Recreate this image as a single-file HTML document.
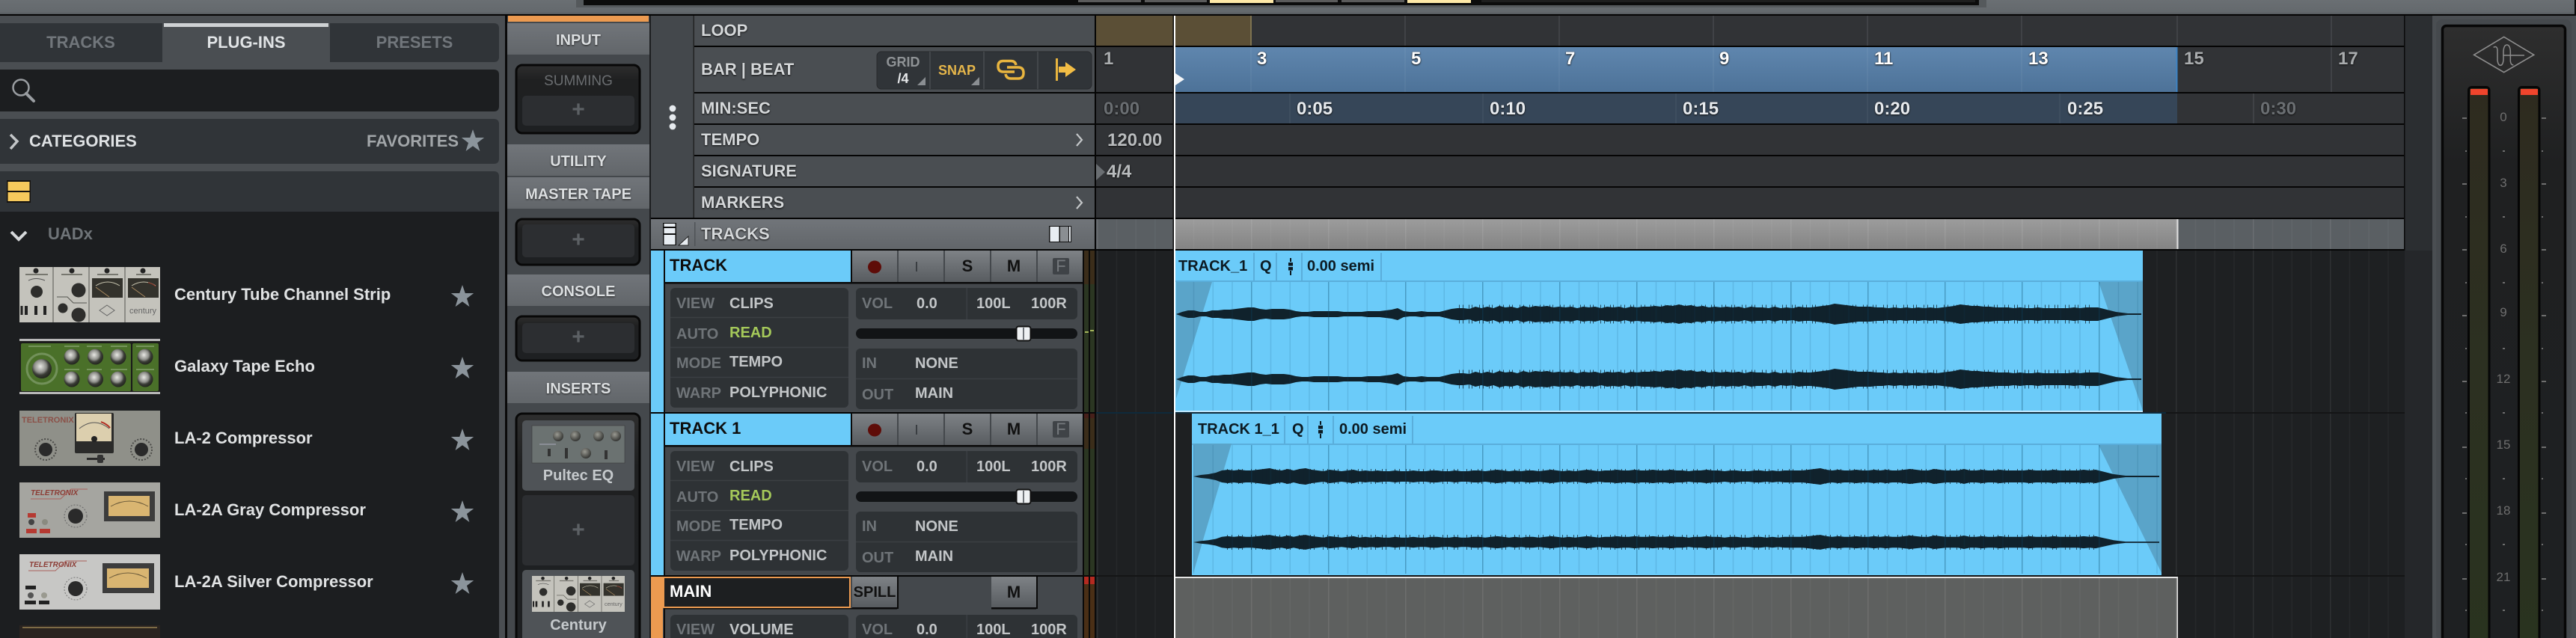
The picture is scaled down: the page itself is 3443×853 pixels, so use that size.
<!DOCTYPE html>
<html><head><meta charset="utf-8"><title>LUNA</title>
<style>
html,body{margin:0;padding:0;background:#4a4e52;}
#r{position:relative;width:3443px;height:853px;overflow:hidden;background:#4a4e52;font-family:"Liberation Sans",sans-serif;}
svg{position:absolute;left:0;top:0;}
.t{position:absolute;white-space:nowrap;font-weight:bold;font-size:22px;line-height:24px;color:#d5d8da;}
.c{transform:translateX(-50%);}
.s{text-shadow:0 1px 2px #111,0 0 1px #222;}
.h{font-size:20px;color:#dcdfe1;text-shadow:0 1px 2px #222;}
.l{font-size:20px;color:#6f7478;}
.v{font-size:20px;color:#c3c6c8;}
.n{font-size:24px;}
.k{color:#0d0d0d;}
.p{font-size:30px;color:#5c6064;}
.g{font-size:17px;font-weight:normal;color:#6e6e6e;}
.cl{font-size:20px;color:#0c1a22;}
</style></head><body><div id="r">
<svg width="3443" height="853" viewBox="0 0 3443 853" xmlns="http://www.w3.org/2000/svg">
<defs>
<linearGradient id="top" x1="0" y1="0" x2="0" y2="1"><stop offset="0" stop-color="#6a6f73"/><stop offset=".85" stop-color="#64696d"/><stop offset="1" stop-color="#54585c"/></linearGradient>
<linearGradient id="hd" x1="0" y1="0" x2="0" y2="1"><stop offset="0" stop-color="#71757a"/><stop offset="1" stop-color="#62666a"/></linearGradient>
<linearGradient id="btn" x1="0" y1="0" x2="0" y2="1"><stop offset="0" stop-color="#7e8286"/><stop offset="1" stop-color="#585c60"/></linearGradient>
<linearGradient id="bl" x1="0" y1="0" x2="0" y2="1"><stop offset="0" stop-color="#5f86ae"/><stop offset="1" stop-color="#4d7298"/></linearGradient>
<linearGradient id="gr" x1="0" y1="0" x2="0" y2="1"><stop offset="0" stop-color="#9c9c9c"/><stop offset="1" stop-color="#848484"/></linearGradient>
<linearGradient id="bx" x1="0" y1="0" x2="0" y2="1"><stop offset="0" stop-color="#2e2e2e"/><stop offset=".22" stop-color="#1f2021"/><stop offset="1" stop-color="#1e2022"/></linearGradient>
<linearGradient id="mtr" x1="0" y1="0" x2="0" y2="1"><stop offset="0" stop-color="#2e2b1f"/><stop offset=".5" stop-color="#2c3021"/><stop offset="1" stop-color="#29331f"/></linearGradient>
<radialGradient id="kn" cx=".42" cy=".38" r=".62"><stop offset="0" stop-color="#e8e8e4"/><stop offset=".5" stop-color="#8e8f8a"/><stop offset=".72" stop-color="#3a3c36"/><stop offset="1" stop-color="#23261e"/></radialGradient>
<radialGradient id="kg" cx=".4" cy=".35" r=".7"><stop offset="0" stop-color="#9a9a92"/><stop offset="1" stop-color="#2d2e2c"/></radialGradient>
<pattern id="tkw" patternUnits="userSpaceOnUse" width="103" height="10"><rect x="24" width="1.5" height="10" fill="#fff" opacity=".09"/><rect x="49.75" width="1.5" height="10" fill="#fff" opacity=".04"/><rect x="75.5" width="1.5" height="10" fill="#fff" opacity=".04"/><rect x="101.25" width="1.5" height="10" fill="#fff" opacity=".04"/></pattern>
<pattern id="tkd" patternUnits="userSpaceOnUse" width="103" height="10"><rect x="24" width="1.5" height="10" fill="#fff" opacity=".07"/><rect x="49.75" width="1.5" height="10" fill="#fff" opacity=".035"/><rect x="75.5" width="1.5" height="10" fill="#fff" opacity=".035"/><rect x="101.25" width="1.5" height="10" fill="#fff" opacity=".035"/></pattern>
<pattern id="tkb" patternUnits="userSpaceOnUse" width="103" height="10"><rect x="24" width="1.5" height="10" fill="#0c4668" opacity=".36"/><rect x="49.75" width="1.5" height="10" fill="#0c4668" opacity=".14"/><rect x="75.5" width="1.5" height="10" fill="#0c4668" opacity=".14"/><rect x="101.25" width="1.5" height="10" fill="#0c4668" opacity=".14"/></pattern>
<path id="w1" d="M1572 0L1580 -3 1588 -5 1596 -5 1604 -3 1612 -3 1620 -5 1628 -5 1636 -6 1644 -6 1652 -7 1660 -8 1668 -9 1676 -9 1684 -7 1692 -6 1700 -7 1708 -7 1716 -7 1724 -6 1732 -4 1740 -3 1748 -3 1756 -4 1764 -4 1772 -4 1780 -4 1788 -4 1796 -3 1804 -3 1812 -3 1820 -3 1828 -4 1836 -4 1844 -4 1852 -5 1860 -6 1868 -8 1876 -4 1884 -3 1892 -3 1900 -4 1908 -3 1916 -3 1924 -3 1932 -5 1940 -7 1948 -8 1956 -8 1964 -7 1972 -10 1980 -8 1988 -10 1996 -8 2004 -11 2012 -9 2020 -10 2028 -8 2036 -11 2044 -9 2052 -11 2060 -10 2068 -11 2076 -9 2084 -10 2092 -9 2100 -10 2108 -8 2116 -10 2124 -9 2132 -10 2140 -8 2148 -10 2156 -9 2164 -10 2172 -8 2180 -10 2188 -9 2196 -10 2204 -10 2212 -11 2220 -10 2228 -12 2236 -11 2244 -13 2252 -11 2260 -12 2268 -10 2276 -11 2284 -9 2292 -10 2300 -9 2308 -10 2316 -9 2324 -10 2332 -8 2340 -10 2348 -9 2356 -9 2364 -8 2372 -10 2380 -8 2388 -9 2396 -8 2404 -10 2412 -9 2420 -9 2428 -10 2436 -11 2444 -12 2452 -14 2460 -13 2468 -12 2476 -11 2484 -10 2492 -10 2500 -10 2508 -9 2516 -9 2524 -8 2532 -9 2540 -8 2548 -9 2556 -8 2564 -9 2572 -8 2580 -9 2588 -8 2596 -9 2604 -10 2612 -11 2620 -13 2628 -12 2636 -11 2644 -11 2652 -10 2660 -10 2668 -9 2676 -9 2684 -9 2692 -8 2700 -9 2708 -8 2716 -8 2724 -9 2732 -8 2740 -8 2748 -8 2756 -8 2764 -8 2772 -9 2780 -8 2788 -9 2796 -9 2804 -9 2812 -7 2820 -5 2828 -3 2836 -2 2844 -1 2862 -1 2862 0Z" fill="#10222c"/>
<path id="w2" d="M1595 0L1605 -2 1615 -3 1625 -5 1633 -8 1641 -9 1649 -8 1657 -9 1665 -8 1673 -8 1681 -9 1689 -10 1697 -11 1705 -9 1713 -8 1721 -10 1729 -8 1737 -10 1745 -11 1753 -9 1761 -8 1769 -7 1777 -9 1785 -8 1793 -7 1801 -8 1809 -9 1817 -7 1825 -8 1833 -7 1841 -8 1849 -7 1857 -7 1865 -8 1873 -7 1881 -7 1889 -8 1897 -7 1905 -7 1913 -8 1921 -8 1929 -7 1937 -7 1945 -8 1953 -7 1961 -7 1969 -8 1977 -8 1985 -7 1993 -8 2001 -9 2009 -8 2017 -7 2025 -8 2033 -7 2041 -8 2049 -8 2057 -7 2065 -8 2073 -9 2081 -8 2089 -7 2097 -8 2105 -7 2113 -8 2121 -9 2129 -8 2137 -7 2145 -8 2153 -8 2161 -9 2169 -8 2177 -8 2185 -9 2193 -8 2201 -8 2209 -9 2217 -8 2225 -8 2233 -9 2241 -8 2249 -8 2257 -7 2265 -8 2273 -8 2281 -9 2289 -8 2297 -8 2305 -7 2313 -8 2321 -8 2329 -7 2337 -7 2345 -8 2353 -8 2361 -7 2369 -8 2377 -7 2385 -8 2393 -8 2401 -8 2409 -8 2417 -9 2425 -10 2433 -11 2441 -9 2449 -8 2457 -9 2465 -8 2473 -8 2481 -9 2489 -8 2497 -8 2505 -9 2513 -8 2521 -9 2529 -8 2537 -8 2545 -9 2553 -10 2561 -9 2569 -8 2577 -8 2585 -10 2593 -9 2601 -8 2609 -8 2617 -8 2625 -10 2633 -8 2641 -8 2649 -9 2657 -8 2665 -8 2673 -9 2681 -8 2689 -8 2697 -8 2705 -8 2713 -9 2721 -8 2729 -8 2737 -8 2745 -9 2753 -8 2761 -8 2769 -8 2777 -8 2785 -9 2793 -8 2801 -9 2809 -7 2817 -5 2825 -3 2833 -2 2841 -1 2886 -1 2886 0Z" fill="#10222c"/>
<g id="star"><polygon points="0,-16 3.8,-5 15.2,-5 6,2 9.4,13 0,6.2 -9.4,13 -6,2 -15.2,-5 -3.8,-5" fill="#8b949b"/></g>
<g id="cent">
<rect width="188" height="74" fill="#c4c3bc"/>
<path d="M45 0v74M93 0v74M141 0v74" stroke="#55554f" stroke-width="1"/>
<circle cx="22" cy="5" r="3.5" fill="#222"/><circle cx="70" cy="5" r="3.5" fill="#222"/><circle cx="117" cy="5" r="3.5" fill="#222"/><circle cx="165" cy="5" r="3.5" fill="#222"/>
<rect x="8" y="9" width="30" height="2" fill="#77776f"/><rect x="56" y="9" width="28" height="2" fill="#77776f"/><rect x="104" y="9" width="28" height="2" fill="#77776f"/><rect x="156" y="9" width="20" height="2" fill="#77776f"/>
<circle cx="23" cy="33" r="8" fill="#2e2e2c"/><path d="M12 18q10-5 22 0" stroke="#555" fill="none"/>
<circle cx="79" cy="31" r="9.5" fill="#2e2e2c"/><circle cx="79" cy="64" r="9.5" fill="#2e2e2c"/><circle cx="58" cy="55" r="6.5" fill="#2e2e2c"/><path d="M50 40h14l8 8h18" stroke="#55554f" fill="none"/>
<rect x="97" y="15" width="41" height="26" fill="#33322c"/><rect x="145" y="15" width="41" height="26" fill="#33322c"/>
<path d="M102 25q16-10 32 0M150 25q16-10 32 0" stroke="#c9c6b0" fill="none"/><path d="M102 27l18 13M150 27l18 13" stroke="#a98a60"/><path d="M172 21q6 1 10 5" stroke="#8c2d20" fill="none"/>
<path d="M9 52v12M22 52v12M34 52v12" stroke="#222" stroke-width="4"/><path d="M3 52v12" stroke="#222" stroke-width="3"/>
<path d="M117 51l10 7-10 7-10-7z" stroke="#666" fill="none"/>
<text x="165" y="62" font-family="Liberation Sans,sans-serif" font-size="11" fill="#666" text-anchor="middle">century</text>
</g>
</defs>

<!-- top bar -->
<rect width="3443" height="19" fill="url(#top)"/>
<rect x="770" width="1885" height="10" fill="#55595c"/>
<rect x="780" width="1865" height="7" fill="#0c0c0c"/>
<rect x="1980" y="0" width="660" height="3" fill="#1e1e1e"/>
<rect x="1441" width="84" height="3" fill="#5b5b5b"/><rect x="1530" width="83" height="3" fill="#5b5b5b"/><rect x="1705" width="83" height="3" fill="#5b5b5b"/><rect x="1793" width="84" height="3" fill="#5b5b5b"/>
<rect x="1617" width="85" height="4" fill="#ffe9a8"/><rect x="1881" width="85" height="4" fill="#ffe9a8"/>
<rect y="19" width="3443" height="2" fill="#050505"/>

<!-- left panel -->
<rect y="21" width="676" height="832" fill="#4a4e52"/>
<path d="M0 31H217V83H0Z" fill="#303438"/>
<path d="M441 31H660Q667 31 667 38V76Q667 83 660 83H441Z" fill="#303438"/>
<rect x="219" y="31" width="220" height="5" fill="#cfd2d4"/>
<path d="M0 93H660Q667 93 667 100V142Q667 149 660 149H0Z" fill="#1c1e20"/>
<circle cx="28" cy="117" r="10.5" fill="none" stroke="#9a9ea2" stroke-width="2.5"/><path d="M35 125L45 135" stroke="#9a9ea2" stroke-width="4" stroke-linecap="round"/>
<path d="M0 159H660Q667 159 667 166V212Q667 219 660 219H0Z" fill="#303438"/>
<path d="M14 180L23 189L14 199" fill="none" stroke="#c3c6c8" stroke-width="3.5"/>
<use href="#star" transform="translate(632,189)"/>
<path d="M0 229H660Q667 229 667 236V283H0Z" fill="#303438"/>
<rect x="9" y="241" width="32" height="30" fill="#141210"/><rect x="10.5" y="243" width="29" height="12" fill="#f6c95c"/><rect x="10.5" y="257" width="29" height="12" fill="#f6c95c"/>
<rect y="283" width="667" height="570" fill="#1c1e20"/>
<path d="M15 310L25 320L35 310" fill="none" stroke="#d5d8da" stroke-width="4"/>
<rect x="675" y="21" width="3" height="832" fill="#0a0a0a"/>

<!-- thumbs -->
<g transform="translate(26,357)"><use href="#cent"/></g>
<g transform="translate(26,453)"><rect width="188" height="75" fill="#1a1a1a"/><rect width="188" height="3" fill="#b8b8b8"/><rect y="71" width="188" height="3" fill="#b8b8b8"/>
<rect x="2" y="6" width="147" height="64" rx="2" fill="#4a7029"/><rect x="151" y="6" width="35" height="64" rx="2" fill="#4a7029"/>
<circle cx="30" cy="40" r="20" fill="none" stroke="#8ea67c" stroke-width="3" opacity=".6"/>
<circle cx="30" cy="40" r="13" fill="url(#kn)"/>
<g fill="url(#kn)"><circle cx="70" cy="24" r="10.5"/><circle cx="101.5" cy="24" r="10.5"/><circle cx="132" cy="24" r="10.5"/><circle cx="168" cy="24" r="10.5"/><circle cx="70" cy="54" r="10.5"/><circle cx="101.5" cy="54" r="10.5"/><circle cx="132" cy="54" r="10.5"/><circle cx="168" cy="54" r="10.5"/></g>
<path d="M12 10h30M60 10h20M90 10h20M122 10h22M156 10h24M60 41h20M90 41h20M122 41h22M156 41h24" stroke="#a9bf98" stroke-width="1.5" opacity=".6"/></g>
<g transform="translate(26,549)"><rect width="188" height="74" fill="#8f9089"/>
<rect x="74" y="3" width="52" height="54" rx="2" fill="#2b2b2a"/><rect x="76" y="4" width="47" height="37" fill="#dccfae"/><path d="M80 24q20-16 40 0" stroke="#555" fill="none"/><path d="M109 15q8 3 12 8" stroke="#b02a20" stroke-width="2" fill="none"/><circle cx="100" cy="38" r="4" fill="#222"/>
<circle cx="35" cy="52" r="9" fill="#2a2a2a"/><circle cx="163" cy="52" r="9" fill="#2a2a2a"/><circle cx="35" cy="52" r="14" fill="none" stroke="#4d4d4a" stroke-width="2" stroke-dasharray="2 2"/><circle cx="163" cy="52" r="14" fill="none" stroke="#4d4d4a" stroke-width="2" stroke-dasharray="2 2"/>
<rect x="90" y="63" width="24" height="3" fill="#2a2a2a"/><rect x="104" y="59" width="8" height="11" rx="2" fill="#333"/>
<text x="3" y="16" font-family="Liberation Sans,sans-serif" font-weight="bold" font-size="11" fill="#8b5148">TELETRONIX</text></g>
<g transform="translate(26,645)"><rect width="188" height="74" fill="#a5a5a0"/>
<rect x="113" y="12" width="68" height="40" fill="#3c3c3c"/><rect x="119" y="18" width="55" height="27" fill="#d9b571"/><path d="M122 32q25-14 50 0" stroke="#6a5a3a" fill="none"/>
<circle cx="75" cy="45" r="10" fill="#2a2a2a"/><circle cx="75" cy="45" r="15" fill="none" stroke="#666" stroke-dasharray="2 2"/>
<rect x="11" y="41" width="11" height="6" fill="#b53a32"/><rect x="9" y="62" width="14" height="6" fill="#b53a32"/><rect x="27" y="62" width="14" height="6" fill="#b53a32"/><circle cx="16" cy="53" r="4" fill="#444"/><circle cx="34" cy="53" r="4" fill="#8a8a80"/>
<text x="15" y="17" font-family="Liberation Sans,sans-serif" font-weight="bold" font-style="italic" font-size="10" fill="#8c3d36">TELETRONIX</text><path d="M15 22h40l14-13h22" stroke="#a9605a" fill="none"/></g>
<g transform="translate(26,741)"><rect width="188" height="74" fill="#c7c7c5"/>
<rect x="111" y="12" width="69" height="40" fill="#3c3c3c"/><rect x="117" y="19" width="56" height="26" fill="#d9b571"/><path d="M120 32q25-14 50 0" stroke="#6a5a3a" fill="none"/>
<circle cx="75" cy="46" r="10" fill="#2a2a2a"/><circle cx="75" cy="46" r="15" fill="none" stroke="#777" stroke-dasharray="2 2"/>
<rect x="8" y="42" width="14" height="5" fill="#222"/><rect x="7" y="62" width="15" height="5" fill="#222"/><rect x="26" y="62" width="14" height="5" fill="#222"/><circle cx="15" cy="55" r="4" fill="#555"/><circle cx="33" cy="55" r="4" fill="#9a9a90"/>
<text x="13" y="17" font-family="Liberation Sans,sans-serif" font-weight="bold" font-style="italic" font-size="10" fill="#8c3d36">TELETRONIX</text><path d="M12 22h36l14-13h28" stroke="#a9605a" fill="none"/></g>
<rect x="26" y="836" width="188" height="17" fill="#2a2420"/><rect x="30" y="838" width="180" height="2" fill="#7d6b46"/>

<!-- inserts column -->
<rect x="678" y="21" width="192" height="832" fill="#44484c"/>
<rect x="868" y="21" width="2" height="832" fill="#1c1e20"/>
<rect x="679" y="21" width="188" height="8" fill="#ec9a50"/>
<rect x="678" y="31" width="190" height="42" fill="url(#hd)"/>
<rect x="678" y="193" width="190" height="42" fill="url(#hd)"/>
<rect x="678" y="237" width="190" height="42" fill="url(#hd)"/>
<rect x="678" y="367" width="190" height="42" fill="url(#hd)"/>
<rect x="678" y="497" width="190" height="42" fill="url(#hd)"/>
<g fill="url(#bx)" stroke="#080808" stroke-width="3">
<rect x="690" y="87" width="165" height="91" rx="8"/>
<rect x="690" y="293" width="165" height="61" rx="8"/>
<rect x="690" y="423" width="165" height="59" rx="8"/>
<rect x="690" y="553" width="165" height="320" rx="8"/></g>
<g fill="#2c2e31">
<rect x="698" y="128" width="150" height="40" rx="5"/>
<rect x="698" y="300" width="150" height="44" rx="5"/>
<rect x="698" y="432" width="150" height="40" rx="5"/>
<rect x="698" y="662" width="150" height="94" rx="5"/></g>
<rect x="698" y="562" width="150" height="94" rx="5" fill="#4f5357"/>
<rect x="698" y="762" width="150" height="100" rx="5" fill="#4f5357"/>
<g transform="translate(711,569)"><rect width="124" height="50" fill="#6b7271" stroke="#333" stroke-width=".5"/>
<g fill="url(#kg)"><circle cx="35" cy="14" r="7"/><circle cx="58" cy="14" r="7"/><circle cx="89" cy="14" r="7"/><circle cx="112" cy="14" r="7"/><circle cx="72" cy="37" r="7"/></g>
<path d="M23 31v10M46 30v14M99 33v12" stroke="#333" stroke-width="4"/><path d="M10 25h22" stroke="#aab" stroke-width="1"/></g>
<svg x="711" y="770" width="124" height="48" viewBox="0 0 188 74" preserveAspectRatio="none"><use href="#cent"/></svg>

<!-- dots column + rows -->
<rect x="870" y="21" width="58" height="270" fill="#44484c"/>
<rect x="926.5" y="21" width="1.5" height="270" fill="#222"/>
<circle cx="899" cy="145" r="4.4" fill="#e6eaee"/><circle cx="899" cy="157" r="4.4" fill="#e6eaee"/><circle cx="899" cy="169" r="4.4" fill="#e6eaee"/>
<g fill="#4a4e52">
<rect x="928" y="21" width="535" height="40"/><rect x="928" y="63" width="535" height="60"/><rect x="928" y="125" width="535" height="40"/>
<rect x="928" y="167" width="535" height="40"/><rect x="928" y="209" width="535" height="40"/><rect x="928" y="251" width="535" height="40"/></g>
<rect x="870" y="291" width="595" height="2" fill="#050505"/>
<rect x="870" y="293" width="593" height="40" fill="url(#hd)"/>
<rect x="870" y="333" width="595" height="2" fill="#050505"/>
<rect x="928" y="297" width="1.5" height="32" fill="#4f5357"/>
<rect x="886" y="298" width="18" height="30" fill="#111"/><rect x="887.5" y="299" width="15" height="4" fill="#e8edf2"/><rect x="887.5" y="305" width="15" height="7" fill="#e8edf2"/><rect x="887.5" y="314" width="15" height="13" fill="#e8edf2"/>
<polygon points="920,316 920,328 907,328" fill="#e8edf2" stroke="#222"/>
<rect x="1402" y="302" width="30" height="22" fill="#111"/><rect x="1403.5" y="303" width="12" height="20" fill="#e8edf2"/><rect x="1417" y="303" width="11" height="20" fill="#8a8e92"/><rect x="1429" y="303" width="2" height="20" fill="#e8edf2"/>
<rect x="1172" y="69" width="287" height="50" rx="6" fill="#303438" stroke="#282a2d"/>
<path d="M1243 69v50M1315 69v50M1387 69v50" stroke="#484c50" stroke-width="1.5"/>
<polygon points="1237,103 1237,114 1226,114" fill="#8a8e92"/><polygon points="1309,103 1309,114 1298,114" fill="#8a8e92"/>
<g fill="none" stroke="#e9b53f" stroke-width="3.5"><path d="M1356 96H1341Q1334 96 1334 88.500Q1334 81.500 1341 81.500H1351Q1357 81.500 1358 87"/><path d="M1346 90H1361Q1368 90 1368 97.500Q1368 105 1361 105H1351Q1345 105 1344 99"/></g>
<rect x="1411" y="78" width="3" height="30" fill="#e9b53f"/><polygon points="1415,89 1424,89 1424,83 1438,93 1424,103 1424,97 1415,97" fill="#f2bd45"/>
<path d="M1439 179L1446 187L1439 195M1439 263L1446 271L1439 279" fill="none" stroke="#c3c6c8" stroke-width="2.2"/>
<g fill="#050505"><rect x="928" y="61" width="537" height="2"/><rect x="928" y="123" width="537" height="2"/><rect x="928" y="165" width="537" height="2"/><rect x="928" y="207" width="537" height="2"/><rect x="928" y="249" width="537" height="2"/></g>

<!-- timeline rows -->
<rect x="1463" y="21" width="2" height="314" fill="#050505"/>
<rect x="1465" y="21" width="1749" height="270" fill="#313336"/>
<rect x="1465" y="21" width="207" height="40" fill="#5b4f36"/><rect x="1671" y="21" width="2" height="40" fill="#7d7250"/>
<rect x="1571" y="63" width="1339" height="60" fill="url(#bl)"/>
<rect x="2908.500" y="63" width="2" height="60" fill="#3d83c4"/>
<rect x="1571" y="125" width="1339" height="40" fill="#364658"/>
<g stroke="#45474b" stroke-width="1.5"><path d="M1878 21v40M2084 21v40M2290 21v40M2496 21v40M2702 21v40M2910 21v40M3116 21v40M3116 63v60M3012 125v40"/></g>
<g stroke="#fff" stroke-width="1.2" opacity=".07"><path d="M1672 63v60M1878 63v60M2084 63v60M2290 63v60M2496 63v60M2702 63v60M1724 125v40M1982 125v40M2240 125v40M2496 125v40M2753 125v40"/></g>
<g fill="#050505"><rect x="1465" y="61" width="1749" height="2"/><rect x="1465" y="123" width="1749" height="2"/><rect x="1465" y="165" width="1749" height="2"/><rect x="1465" y="207" width="1749" height="2"/><rect x="1465" y="249" width="1749" height="2"/><rect x="1465" y="291" width="1749" height="2"/><rect x="1465" y="333" width="1749" height="2"/></g>
<polygon points="1465,219 1477,230 1465,241" fill="#6a6e72"/>
<rect x="1465" y="293" width="1749" height="40" fill="#5a5f63"/>
<rect x="1571" y="293" width="1339" height="40" fill="url(#gr)"/>
<rect x="1465" y="293" width="1749" height="40" fill="url(#tkw)"/>
<rect x="2909.500" y="293" width="2" height="40" fill="#e0e0e0"/>

<!-- clip area -->
<rect x="1465" y="335" width="1749" height="518" fill="#1e2022"/>
<rect x="1465" y="335" width="1749" height="518" fill="url(#tkd)"/>
<rect x="1465" y="551" width="1749" height="2" fill="#141516"/><rect x="1465" y="769" width="1749" height="2" fill="#141516"/>

<rect x="3214" y="21" width="37" height="314" fill="#2b2e31"/>
<rect x="3214" y="335" width="37" height="518" fill="#25272a"/>
<rect x="3213" y="21" width="1.5" height="314" fill="#0a0a0a"/>
<rect x="3251" y="21" width="192" height="832" fill="#4a4e52"/>
<rect x="3441" y="0" width="2" height="21" fill="#0a0a0a"/>

<!-- clip 1 -->
<rect x="1571" y="335" width="1293" height="216" fill="#6bcbf9"/>
<rect x="1571" y="375" width="1293" height="2" fill="#5aaedb"/>
<polygon points="1572,377 1620,377 1572,533" fill="#5aa4c9"/><polygon points="2805,377 2864,377 2864,549" fill="#5aa4c9"/>
<use href="#w1" transform="translate(0,420)"/><use href="#w1" transform="translate(0,420) scale(1,-1)"/>
<use href="#w1" transform="translate(0,507)"/><use href="#w1" transform="translate(0,507) scale(1,-1)"/>
<path d="M1950 420H2800M1950 507H2800" fill="none" stroke="#10222c" stroke-width="25" stroke-dasharray="1 4 1 7 1 3 1 9" opacity=".75"/>
<rect x="1572" y="377" width="1292" height="172" fill="url(#tkb)"/>
<path d="M1676 338v37M1706 338v37M1740 338v37M1846 338v37" stroke="#5aaedb" stroke-width="2"/>
<rect x="1571" y="549" width="1293" height="2" fill="#bfe6fb"/>
<rect x="1465" y="551" width="1430" height="2" fill="#0e2a3b"/>

<!-- clip 2 -->
<rect x="1593" y="553" width="1296" height="216" fill="#6bcbf9"/>
<rect x="1593" y="593" width="1296" height="2" fill="#5aaedb"/>
<polygon points="1595,593 1646,593 1595,766" fill="#5aa4c9"/><polygon points="2805,595 2889,595 2889,766" fill="#5aa4c9"/>
<use href="#w2" transform="translate(0,637)"/><use href="#w2" transform="translate(0,637) scale(1,-1)"/>
<use href="#w2" transform="translate(0,725) scale(1,.9)"/><use href="#w2" transform="translate(0,725) scale(1,-.9)"/>
<path d="M1640 637H2800M1640 725H2800" fill="none" stroke="#10222c" stroke-width="20" stroke-dasharray="1 5 1 8 1 4 1 11" opacity=".75"/>
<rect x="1595" y="595" width="1292" height="172" fill="url(#tkb)"/>
<path d="M1717 556v37M1748 556v37M1782 556v37M1888 556v37" stroke="#5aaedb" stroke-width="2"/>

<!-- main clip -->
<rect x="1571" y="771" width="1339" height="82" fill="#5e605f"/>
<rect x="1571" y="771" width="1339" height="82" fill="url(#tkw)"/>
<rect x="1571" y="771" width="1340" height="2" fill="#e4e4e4"/><rect x="2909.500" y="771" width="1.500" height="82" fill="#e4e4e4"/>

<!-- TIMELINE markers -->
<rect x="1567.500" y="21" width="1.500" height="832" fill="#0a0a0a"/>
<rect x="1569" y="21" width="2" height="832" fill="#fff"/>
<polygon points="1571,98 1583,106 1571,114" fill="#f4f6f8"/>
<!-- clip Q-icons -->
<path d="M1725 345v5M1725 362v6M1765 563v5M1765 580v6" stroke="#0c1a22" stroke-width="2"/>
<rect x="1722" y="351" width="6" height="4.500" fill="#0c1a22"/><rect x="1722" y="357" width="6" height="4.500" fill="#0c1a22"/>
<rect x="1762" y="569" width="6" height="4.500" fill="#0c1a22"/><rect x="1762" y="575" width="6" height="4.500" fill="#0c1a22"/>

<!-- tracks -->
<rect x="870" y="335" width="17" height="434" fill="#6bcbf9"/>
<rect x="870" y="771" width="16" height="82" fill="#ec9a50"/>
<rect x="870" y="551" width="18" height="2" fill="#050505"/>
<rect x="870" y="769" width="595" height="2" fill="#050505"/>
<rect x="887" y="335" width="2" height="518" fill="#0d0d0d"/>
<rect x="889" y="335" width="558" height="518" fill="#44484c"/>
<rect x="1447" y="335" width="18" height="518" fill="#0a0a0a"/>
<g>
<path d="M1449 335h6v45h-6zM1457 335h6v45h-6zM1449 553h6v47h-6zM1457 553h6v47h-6z" fill="#3b2d1a"/>
<path d="M1449 380h6v171h-6zM1457 380h6v171h-6zM1449 600h6v169h-6zM1457 600h6v169h-6z" fill="#2b3622"/>
<path d="M1449 553h6v6h-6zM1457 553h6v6h-6z" fill="#47201a"/>
<path d="M1449 771h6v82h-6zM1457 771h6v82h-6z" fill="#4a2f16"/>
<path d="M1449 771h6v10h-6zM1457 771h6v10h-6z" fill="#b42a20"/>
<path d="M1450 443h5v2h-5zM1457 441h5v2h-5z" fill="#a4b45a"/>
</g>
<!-- track 1 -->
<rect x="889" y="335" width="248" height="42" fill="#6bcbf9"/>
<rect x="889" y="377" width="558" height="2.500" fill="#0a0a0a"/>
<rect x="1137" y="335" width="2" height="42" fill="#0a0a0a"/>
<g fill="url(#btn)"><rect x="1139" y="335" width="60" height="42"/><rect x="1201" y="335" width="60" height="42"/><rect x="1263" y="335" width="60" height="42"/><rect x="1325" y="335" width="60" height="42"/><rect x="1387" y="335" width="60" height="42"/></g>
<ellipse cx="1169" cy="357" rx="9" ry="8.500" fill="#5e0c08"/>
<rect x="1407" y="345" width="22" height="22" rx="2" fill="#3f4347"/>
<rect x="1224" y="350" width="2" height="13" fill="#3a3e42"/>
<rect x="896" y="385" width="238" height="160" rx="6" fill="#2e3235"/>
<path d="M896 424.500h238M896 464.500h238M896 504.500h238" stroke="#3b3f43" stroke-width="1.500"/>
<rect x="1144" y="385" width="296" height="42" rx="6" fill="#2e3235"/><rect x="1291.500" y="385" width="1.500" height="42" fill="#3b3f43"/>
<rect x="1144" y="439" width="296" height="14" rx="7" fill="#121416"/>
<rect x="1358.500" y="436.500" width="19" height="19" rx="3" fill="#eef1f3" stroke="#111" stroke-width="2"/><rect x="1367" y="438" width="2" height="17" fill="#70757a"/>
<rect x="1144" y="466" width="296" height="81" rx="6" fill="#2e3235"/><path d="M1144 506.500h296" stroke="#3b3f43" stroke-width="1.500"/>
<!-- track 2 -->
<rect x="889" y="551" width="558" height="2" fill="#050505"/>
<rect x="889" y="553" width="248" height="42" fill="#6bcbf9"/>
<rect x="889" y="595" width="558" height="2.500" fill="#0a0a0a"/>
<rect x="1137" y="553" width="2" height="42" fill="#0a0a0a"/>
<g fill="url(#btn)"><rect x="1139" y="553" width="60" height="42"/><rect x="1201" y="553" width="60" height="42"/><rect x="1263" y="553" width="60" height="42"/><rect x="1325" y="553" width="60" height="42"/><rect x="1387" y="553" width="60" height="42"/></g>
<ellipse cx="1169" cy="575" rx="9" ry="8.500" fill="#5e0c08"/>
<rect x="1407" y="563" width="22" height="22" rx="2" fill="#3f4347"/>
<rect x="1224" y="568" width="2" height="13" fill="#3a3e42"/>
<rect x="896" y="603" width="238" height="160" rx="6" fill="#2e3235"/>
<path d="M896 642.500h238M896 682.500h238M896 722.500h238" stroke="#3b3f43" stroke-width="1.500"/>
<rect x="1144" y="603" width="296" height="42" rx="6" fill="#2e3235"/><rect x="1291.500" y="603" width="1.500" height="42" fill="#3b3f43"/>
<rect x="1144" y="657" width="296" height="14" rx="7" fill="#121416"/>
<rect x="1358.500" y="654.500" width="19" height="19" rx="3" fill="#eef1f3" stroke="#111" stroke-width="2"/><rect x="1367" y="656" width="2" height="17" fill="#70757a"/>
<rect x="1144" y="684" width="296" height="81" rx="6" fill="#2e3235"/><path d="M1144 724.500h296" stroke="#3b3f43" stroke-width="1.500"/>
<!-- main -->
<rect x="870" y="769" width="577" height="2" fill="#050505"/>
<rect x="887" y="772" width="249" height="40" fill="#1d1f21" stroke="#ec9a50" stroke-width="2"/>
<rect x="1139" y="771" width="60" height="41" fill="url(#btn)"/><rect x="1325" y="771" width="60" height="41" fill="url(#btn)"/>
<rect x="1139" y="812" width="60" height="2.500" fill="#0a0a0a"/><rect x="1325" y="812" width="60" height="2.500" fill="#0a0a0a"/><rect x="1199" y="771" width="2" height="43" fill="#0a0a0a"/><rect x="1385" y="771" width="2" height="43" fill="#0a0a0a"/>
<rect x="887" y="813" width="252" height="1.500" fill="#0a0a0a"/>
<rect x="896" y="822" width="238" height="50" rx="6" fill="#2e3235"/>
<rect x="1144" y="822" width="296" height="42" rx="6" fill="#2e3235"/><rect x="1291.500" y="822" width="1.500" height="42" fill="#3b3f43"/>

<!-- right meter -->
<rect x="3256" y="26" width="181" height="830" rx="8" fill="#45494d"/>
<rect x="3264.500" y="34.500" width="164" height="830" rx="5" fill="url(#bx)" stroke="#070707" stroke-width="3.500"/>
<g transform="translate(3200,0) scale(.33333)" fill="none" stroke="#8c8c8c">
<path d="M320 220L440 148L560 220L440 290Z" stroke-width="5"/>
<path d="M398 190Q412 182 414 200V240Q416 262 426 262Q436 262 438 240V205Q440 180 452 180Q464 180 466 205V245Q468 262 478 260" stroke-width="4.500"/>
<path d="M436 222H522" stroke-width="4.500"/></g>
<rect x="3299.500" y="116.500" width="27.500" height="745" rx="4" fill="url(#mtr)" stroke="#060606" stroke-width="3"/>
<rect x="3366.500" y="116.500" width="27.500" height="745" rx="4" fill="url(#mtr)" stroke="#060606" stroke-width="3"/>
<rect x="3302" y="119" width="23" height="8" fill="#f0452c"/><rect x="3369" y="119" width="23" height="8" fill="#f0452c"/>
<g fill="#6e6e6e">
<path d="M3291 157h6v2h-6zM3397 157h6v2h-6zM3291 245h6v2h-6zM3397 245h6v2h-6zM3291 333h6v2h-6zM3397 333h6v2h-6zM3291 421h6v2h-6zM3397 421h6v2h-6zM3291 509h6v2h-6zM3397 509h6v2h-6zM3291 597h6v2h-6zM3397 597h6v2h-6zM3291 685h6v2h-6zM3397 685h6v2h-6zM3291 773h6v2h-6zM3397 773h6v2h-6z"/>
<path d="M3295 201h2v2h-2zM3345 201h3v2h-3zM3397 201h2v2h-2zM3295 289h2v2h-2zM3345 289h3v2h-3zM3397 289h2v2h-2zM3295 377h2v2h-2zM3345 377h3v2h-3zM3397 377h2v2h-2zM3295 465h2v2h-2zM3345 465h3v2h-3zM3397 465h2v2h-2zM3295 551h2v2h-2zM3345 551h3v2h-3zM3397 551h2v2h-2zM3295 639h2v2h-2zM3345 639h3v2h-3zM3397 639h2v2h-2zM3295 727h2v2h-2zM3345 727h3v2h-3zM3397 727h2v2h-2zM3295 815h2v2h-2zM3345 815h3v2h-3zM3397 815h2v2h-2z"/>
</g>
<g transform="translate(618,397)"><use href="#star"/></g>
<g transform="translate(618,493)"><use href="#star"/></g>
<g transform="translate(618,589)"><use href="#star"/></g>
<g transform="translate(618,685)"><use href="#star"/></g>
<g transform="translate(618,781)"><use href="#star"/></g>
</svg>

<!-- left panel text -->
<div class="t c" style="left:108px;top:45px;color:#71767b">TRACKS</div>
<div class="t c" style="left:329px;top:45px;color:#e0e3e5">PLUG-INS</div>
<div class="t c" style="left:554px;top:45px;color:#71767b">PRESETS</div>
<div class="t" style="left:39px;top:177px;color:#dfe2e4">CATEGORIES</div>
<div class="t" style="left:490px;top:177px;color:#a2a6a9">FAVORITES</div>
<div class="t" style="left:64px;top:301px;color:#6f7478;">UADx</div>
<div class="t" style="left:233px;top:382px;color:#e0e2e3">Century Tube Channel Strip</div>
<div class="t" style="left:233px;top:478px;color:#e0e2e3">Galaxy Tape Echo</div>
<div class="t" style="left:233px;top:574px;color:#e0e2e3">LA-2 Compressor</div>
<div class="t" style="left:233px;top:670px;color:#e0e2e3">LA-2A Gray Compressor</div>
<div class="t" style="left:233px;top:766px;color:#e0e2e3">LA-2A Silver Compressor</div>

<!-- inserts column text -->
<div class="t c h" style="left:773px;top:42px">INPUT</div>
<div class="t c" style="left:773px;top:97px;font-size:19px;font-weight:normal;color:#6a6d70">SUMMING</div>
<div class="t c p" style="left:773px;top:135px">+</div>
<div class="t c h" style="left:773px;top:204px">UTILITY</div>
<div class="t c h" style="left:773px;top:248px">MASTER TAPE</div>
<div class="t c p" style="left:773px;top:309px">+</div>
<div class="t c h" style="left:773px;top:378px">CONSOLE</div>
<div class="t c p" style="left:773px;top:439px">+</div>
<div class="t c h" style="left:773px;top:508px">INSERTS</div>
<div class="t c" style="left:773px;top:624px;font-size:20px;color:#c5c9cc">Pultec EQ</div>
<div class="t c p" style="left:773px;top:697px">+</div>
<div class="t c" style="left:773px;top:824px;font-size:20px;color:#c5c9cc">Century</div>

<!-- row labels -->
<div class="t s" style="left:937px;top:29px">LOOP</div>
<div class="t s" style="left:937px;top:81px">BAR | BEAT</div>
<div class="t s" style="left:937px;top:133px">MIN:SEC</div>
<div class="t s" style="left:937px;top:175px">TEMPO</div>
<div class="t s" style="left:937px;top:217px">SIGNATURE</div>
<div class="t s" style="left:937px;top:259px">MARKERS</div>
<div class="t s" style="left:937px;top:301px">TRACKS</div>
<div class="t c" style="left:1207px;top:71px;font-size:18px;color:#8f9396">GRID</div>
<div class="t c" style="left:1207px;top:93px;font-size:18px;color:#e8eaec">/4</div>
<div class="t c" style="left:1279px;top:82px;font-size:18px;color:#e6b64a">SNAP</div>

<!-- timeline numbers -->
<div class="t n s" style="left:1475px;top:67px;color:#a9acae">1</div>
<div class="t n s" style="left:1680px;top:67px;color:#fff">3</div>
<div class="t n s" style="left:1886px;top:67px;color:#fff">5</div>
<div class="t n s" style="left:2092px;top:67px;color:#fff">7</div>
<div class="t n s" style="left:2298px;top:67px;color:#fff">9</div>
<div class="t n s" style="left:2505px;top:67px;color:#fff">11</div>
<div class="t n s" style="left:2711px;top:67px;color:#fff">13</div>
<div class="t n s" style="left:2919px;top:67px;color:#a9acae">15</div>
<div class="t n s" style="left:3125px;top:67px;color:#a9acae">17</div>
<div class="t n s" style="left:1475px;top:134px;color:#6a6e72">0:00</div>
<div class="t n s" style="left:1733px;top:134px;color:#e6eaee">0:05</div>
<div class="t n s" style="left:1991px;top:134px;color:#e6eaee">0:10</div>
<div class="t n s" style="left:2249px;top:134px;color:#e6eaee">0:15</div>
<div class="t n s" style="left:2505px;top:134px;color:#e6eaee">0:20</div>
<div class="t n s" style="left:2763px;top:134px;color:#e6eaee">0:25</div>
<div class="t n s" style="left:3021px;top:134px;color:#6a6e72">0:30</div>
<div class="t n s" style="left:1480px;top:176px;color:#b8bbbd">120.00</div>
<div class="t n s" style="left:1479px;top:218px;color:#b8bbbd">4/4</div>

<!-- clip labels -->
<div class="t cl" style="left:1575px;top:344px">TRACK_1</div>
<div class="t cl" style="left:1684px;top:344px">Q</div>
<div class="t cl" style="left:1747px;top:344px">0.00 semi</div>
<div class="t cl" style="left:1601px;top:562px">TRACK 1_1</div>
<div class="t cl" style="left:1727px;top:562px">Q</div>
<div class="t cl" style="left:1790px;top:562px">0.00 semi</div>

<!-- track 1 text -->
<div class="t k" style="left:895px;top:343px">TRACK</div>
<div class="t c" style="left:1293px;top:344px;color:#111">S</div>
<div class="t c" style="left:1355px;top:344px;color:#111">M</div>
<div class="t c" style="left:1418px;top:344px;font-weight:normal;color:#75797d">F</div>
<div class="t l" style="left:904px;top:394px">VIEW</div><div class="t v" style="left:975px;top:394px">CLIPS</div>
<div class="t l" style="left:904px;top:435px">AUTO</div><div class="t v" style="left:975px;top:433px;color:#a5c95a">READ</div>
<div class="t l" style="left:904px;top:474px">MODE</div><div class="t v" style="left:975px;top:472px">TEMPO</div>
<div class="t l" style="left:904px;top:514px">WARP</div><div class="t v" style="left:975px;top:513px">POLYPHONIC</div>
<div class="t l" style="left:1152px;top:394px">VOL</div><div class="t v" style="left:1225px;top:394px">0.0</div><div class="t v" style="left:1305px;top:394px">100L</div><div class="t v" style="left:1378px;top:394px">100R</div>
<div class="t l" style="left:1152px;top:474px">IN</div><div class="t v" style="left:1223px;top:474px">NONE</div>
<div class="t l" style="left:1152px;top:516px">OUT</div><div class="t v" style="left:1223px;top:514px">MAIN</div>
<!-- track 2 text -->
<div class="t k" style="left:895px;top:561px">TRACK 1</div>
<div class="t c" style="left:1293px;top:562px;color:#111">S</div>
<div class="t c" style="left:1355px;top:562px;color:#111">M</div>
<div class="t c" style="left:1418px;top:562px;font-weight:normal;color:#75797d">F</div>
<div class="t l" style="left:904px;top:612px">VIEW</div><div class="t v" style="left:975px;top:612px">CLIPS</div>
<div class="t l" style="left:904px;top:653px">AUTO</div><div class="t v" style="left:975px;top:651px;color:#a5c95a">READ</div>
<div class="t l" style="left:904px;top:692px">MODE</div><div class="t v" style="left:975px;top:690px">TEMPO</div>
<div class="t l" style="left:904px;top:732px">WARP</div><div class="t v" style="left:975px;top:731px">POLYPHONIC</div>
<div class="t l" style="left:1152px;top:612px">VOL</div><div class="t v" style="left:1225px;top:612px">0.0</div><div class="t v" style="left:1305px;top:612px">100L</div><div class="t v" style="left:1378px;top:612px">100R</div>
<div class="t l" style="left:1152px;top:692px">IN</div><div class="t v" style="left:1223px;top:692px">NONE</div>
<div class="t l" style="left:1152px;top:734px">OUT</div><div class="t v" style="left:1223px;top:732px">MAIN</div>
<!-- main text -->
<div class="t" style="left:895px;top:779px;color:#fff">MAIN</div>
<div class="t c" style="left:1169px;top:780px;font-size:20px;color:#111">SPILL</div>
<div class="t c" style="left:1355px;top:780px;color:#111">M</div>
<div class="t l" style="left:904px;top:830px">VIEW</div><div class="t v" style="left:975px;top:830px">VOLUME</div>
<div class="t l" style="left:1152px;top:830px">VOL</div><div class="t v" style="left:1225px;top:830px">0.0</div><div class="t v" style="left:1305px;top:830px">100L</div><div class="t v" style="left:1378px;top:830px">100R</div>

<!-- meter scale -->
<div class="t c g" style="left:3346px;top:145px">0</div>
<div class="t c g" style="left:3346px;top:233px">3</div>
<div class="t c g" style="left:3346px;top:321px">6</div>
<div class="t c g" style="left:3346px;top:406px">9</div>
<div class="t c g" style="left:3346px;top:495px">12</div>
<div class="t c g" style="left:3346px;top:583px">15</div>
<div class="t c g" style="left:3346px;top:671px">18</div>
<div class="t c g" style="left:3346px;top:760px">21</div>
</div></body></html>
